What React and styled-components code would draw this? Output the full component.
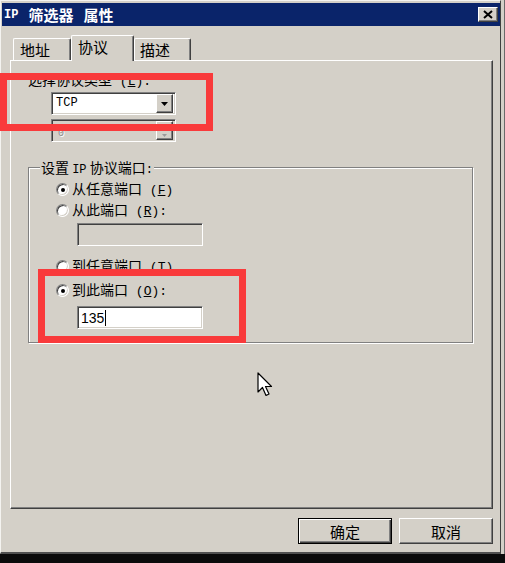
import React from 'react';
import styled, { createGlobalStyle, css } from 'styled-components';

const face = '#d4d0c8';

const Global = createGlobalStyle`
  html, body { margin: 0; padding: 0; background: #0b0b0b; }
  body { font-family: "Noto Sans CJK SC", "Noto Sans CJK JP", sans-serif; }
`;

const sunken = css`
  box-sizing: border-box;
  border: 1px solid;
  border-color: #808080 #ffffff #ffffff #808080;
  box-shadow: inset 1px 1px #404040, inset -1px -1px ${face};
`;

const raised = css`
  box-sizing: border-box;
  border: 1px solid;
  border-color: #ffffff #404040 #404040 #ffffff;
  box-shadow: inset -1px -1px #808080;
  background: ${face};
`;

const Screen = styled.div`
  position: relative;
  width: 505px;
  height: 563px;
  overflow: hidden;
  background: #0b0b0b;
  display: flex;
  flex-direction: column;
  font-family: "Noto Sans CJK SC", "Noto Sans CJK JP", sans-serif;
  font-size: 14px;
  color: #000;
`;

const TopRow = styled.div`
  display: flex;
  height: 554px;
`;

const Window = styled.div`
  box-sizing: border-box;
  width: 501px;
  height: 554px;
  background: ${face};
  border-top: 1px solid #f4f3f0;
  border-left: 1px solid #f4f3f0;
  border-right: 1px solid #404040;
  border-bottom: 2px solid #505050;
  padding: 2px 0 0 1px;
  display: flex;
  flex-direction: column;
`;

const SideStrip = styled.div`
  width: 4px;
  background: ${face};
  box-shadow: inset -1px 0 #6a6a6a;
`;

const TitleBar = styled.div`
  height: 23px;
  background: #0a246a;
  display: flex;
  align-items: center;
  justify-content: space-between;
  padding: 0 2px 0 2px;
`;

const Title = styled.div`
  color: #fff;
  font-weight: bold;
  font-size: 15px;
  line-height: 16px;
  white-space: pre;
  display: flex;
  align-items: center;
  gap: 10px;
`;

const CloseBtn = styled.div`
  ${raised};
  width: 20px;
  height: 15px;
  display: flex;
  align-items: center;
  justify-content: center;
`;

const Lat = styled.span`
  font-family: "Liberation Mono", monospace;
  font-size: ${p => p.$fs || 12}px;
  font-weight: ${p => (p.$bold ? 'bold' : 'normal')};
`;

const Body = styled.div`
  display: flex;
  flex-direction: column;
  padding: 9px 7px 0 8px;
`;

const Tabs = styled.div`
  display: flex;
  align-items: flex-end;
  height: 25px;
  padding-left: 3px;
`;

const Tab = styled.div`
  box-sizing: border-box;
  width: ${p => p.$w}px;
  height: ${p => (p.$active ? 26 : 22)}px;
  margin-bottom: ${p => (p.$active ? -1 : 0)}px;
  position: relative;
  z-index: ${p => (p.$active ? 1 : 0)};
  background: ${face};
  border-top: 1px solid #fff;
  border-left: 1px solid #fff;
  border-right: 1px solid #404040;
  box-shadow: inset -1px 0 #808080;
  border-radius: 2px 2px 0 0;
  padding: 2px 0 0 ${p => p.$pl}px;
  line-height: 18px;
  font-size: 15px;
`;

const Panel = styled.div`
  box-sizing: border-box;
  height: 449px;
  border-top: 1px solid #fff;
  border-left: 1px solid #fff;
  border-right: 1px solid #404040;
  border-bottom: 1px solid #404040;
  box-shadow: inset -1px -1px #808080;
  padding: 11px 0 0 17px;
  display: flex;
  flex-direction: column;
  align-items: flex-start;
`;

const Label = styled.div`
  line-height: 14px;
  height: 14px;
  white-space: pre;
`;

const Combo = styled.div`
  ${sunken};
  width: 125px;
  height: 23px;
  margin: ${p => p.$mt}px 0 0 23px;
  background: ${p => (p.$disabled ? face : '#fff')};
  display: flex;
  align-items: center;
  padding: 2px;
`;

const ComboText = styled.div`
  flex: 1;
  align-self: stretch;
  display: flex;
  align-items: ${p => (p.$disabled ? 'flex-end' : 'center')};
  padding-left: ${p => (p.$disabled ? 4 : 2)}px;
  font-family: "Liberation Mono", monospace;
  font-size: ${p => (p.$disabled ? '10px' : '12px')};
  line-height: ${p => (p.$disabled ? '10px' : '17px')};
  color: ${p => (p.$disabled ? '#8a8a8a' : '#000')};
  text-shadow: ${p => (p.$disabled ? '1px 1px #fff' : 'none')};
`;

const DropBtn = styled.div`
  ${raised};
  width: 17px;
  height: 19px;
  display: flex;
  align-items: ${p => (p.$disabled ? 'flex-end' : 'center')};
  justify-content: center;
  padding-bottom: ${p => (p.$disabled ? 2 : 0)}px;
`;

const Group = styled.div`
  box-sizing: border-box;
  width: 445px;
  height: 176px;
  margin-top: 25px;
  border: 1px solid #808080;
  box-shadow: inset 1px 1px #fff, 1px 1px #fff;
  display: flex;
  flex-direction: column;
  align-items: flex-start;
`;

const Caption = styled.div`
  margin: -8px 0 0 11px;
  padding: 0 1px;
  background: ${face};
  line-height: 14px;
  height: 14px;
  white-space: pre;
`;

const RadioRow = styled.div`
  display: flex;
  align-items: center;
  gap: 3px;
  height: 21px;
  margin: ${p => p.$mt || 0}px 0 0 27px;
  white-space: pre;
  line-height: 14px;
`;

const Radio = styled.span`
  box-sizing: border-box;
  width: 13px;
  height: 13px;
  border-radius: 50%;
  background: #fff;
  border: 1px solid;
  border-color: #808080 #fff #fff #808080;
  box-shadow: inset 1px 1px #404040, inset -1px -1px ${face};
  display: flex;
  align-items: center;
  justify-content: center;
  flex: none;
  &::after {
    content: '';
    width: 4px;
    height: 4px;
    border-radius: 50%;
    background: #000;
    display: ${p => (p.$checked ? 'block' : 'none')};
  }
`;

const Field = styled.div`
  ${sunken};
  width: 126px;
  height: 23px;
  margin: ${p => p.$mt}px 0 0 48px;
  background: ${p => (p.$disabled ? face : '#fff')};
  display: flex;
  align-items: center;
  padding-left: 3px;
  font-family: "Liberation Sans", sans-serif;
  font-size: 14px;
`;

const Caret = styled.span`
  width: 1px;
  height: 16px;
  background: #000;
  margin-left: 1px;
`;

const ButtonRow = styled.div`
  display: flex;
  justify-content: flex-end;
  gap: 7px;
  margin-top: 9px;
`;

const Button = styled.div`
  box-sizing: border-box;
  width: 94px;
  height: 26px;
  display: flex;
  align-items: center;
  justify-content: center;
  font-size: 15px;
  background: ${face};
  ${p =>
    p.$default
      ? css`
          border: 1px solid #000;
          box-shadow: inset 1px 1px #fff, inset -1px -1px #404040, inset -2px -2px #808080;
        `
      : css`
          border: 1px solid;
          border-color: #fff #404040 #404040 #fff;
          box-shadow: inset -1px -1px #808080;
        `}
`;

const Annot = styled.div`
  position: absolute;
  box-sizing: border-box;
  left: ${p => p.$x}px;
  top: ${p => p.$y}px;
  width: ${p => p.$w}px;
  height: ${p => p.$h}px;
  border: 7px solid #f93a3b;
  z-index: 5;
`;

const Cursor = styled.svg`
  position: absolute;
  left: 257px;
  top: 372px;
  z-index: 6;
`;

const Mn = ({ k, tail = '' }) => (
  <Lat $fs={13}>
    {' '}(<u>{k}</u>){tail}
  </Lat>
);

export default function App() {
  return (
    <>
      <Global />
      <Screen>
        <TopRow>
          <Window>
            <TitleBar>
              <Title>
                <Lat $bold>IP</Lat>
                <span>筛选器</span>
                <span>属性</span>
              </Title>
              <CloseBtn>
                <svg width="10" height="9" viewBox="0 0 10 9">
                  <path d="M1 1 L9 8 M9 1 L1 8" stroke="#000" strokeWidth="2" />
                </svg>
              </CloseBtn>
            </TitleBar>
            <Body>
              <Tabs>
                <Tab $w={58} $pl={6}>地址</Tab>
                <Tab $w={63} $pl={6} $active>协议</Tab>
                <Tab $w={57} $pl={5}>描述</Tab>
              </Tabs>
              <Panel>
                <Label>
                  选择协议类型<Mn k="L" tail=":" />
                </Label>
                <Combo $mt={6}>
                  <ComboText>TCP</ComboText>
                  <DropBtn>
                    <svg width="7" height="4" viewBox="0 0 7 4">
                      <path d="M0 0 H7 L3.5 4 Z" fill="#000" />
                    </svg>
                  </DropBtn>
                </Combo>
                <Combo $mt={4} $disabled>
                  <ComboText $disabled>0</ComboText>
                  <DropBtn $disabled>
                    <svg width="5" height="3" viewBox="0 0 5 3">
                      <path d="M0 0 H5 L2.5 3 Z" fill="#9a9a9a" />
                    </svg>
                  </DropBtn>
                </Combo>
                <Group>
                  <Caption>
                    设置 <Lat>IP</Lat> 协议端口<Lat>:</Lat>
                  </Caption>
                  <RadioRow $mt={5}>
                    <Radio $checked />
                    <span>
                      从任意端口<Mn k="F" />
                    </span>
                  </RadioRow>
                  <RadioRow>
                    <Radio />
                    <span>
                      从此端口<Mn k="R" tail=":" />
                    </span>
                  </RadioRow>
                  <Field $mt={2} $disabled />
                  <RadioRow $mt={10}>
                    <Radio />
                    <span>
                      到任意端口<Mn k="T" />
                    </span>
                  </RadioRow>
                  <RadioRow $mt={3}>
                    <Radio $checked />
                    <span>
                      到此端口<Mn k="O" tail=":" />
                    </span>
                  </RadioRow>
                  <Field $mt={5}>
                    135
                    <Caret />
                  </Field>
                </Group>
              </Panel>
              <ButtonRow>
                <Button $default>确定</Button>
                <Button>取消</Button>
              </ButtonRow>
            </Body>
          </Window>
          <SideStrip />
        </TopRow>
        <Annot $x={0} $y={73} $w={213} $h={58} />
        <Annot $x={38} $y={269} $w={208} $h={74} />
        <Cursor width="16" height="26" viewBox="0 0 16 26">
          <path
            d="M1 1 L1 20 L5.5 15.5 L9 23.5 L12 22 L8.5 14.5 L14.5 14.5 Z"
            fill="#fff"
            stroke="#000"
            strokeWidth="1.2"
            strokeLinejoin="round"
          />
        </Cursor>
      </Screen>
    </>
  );
}
